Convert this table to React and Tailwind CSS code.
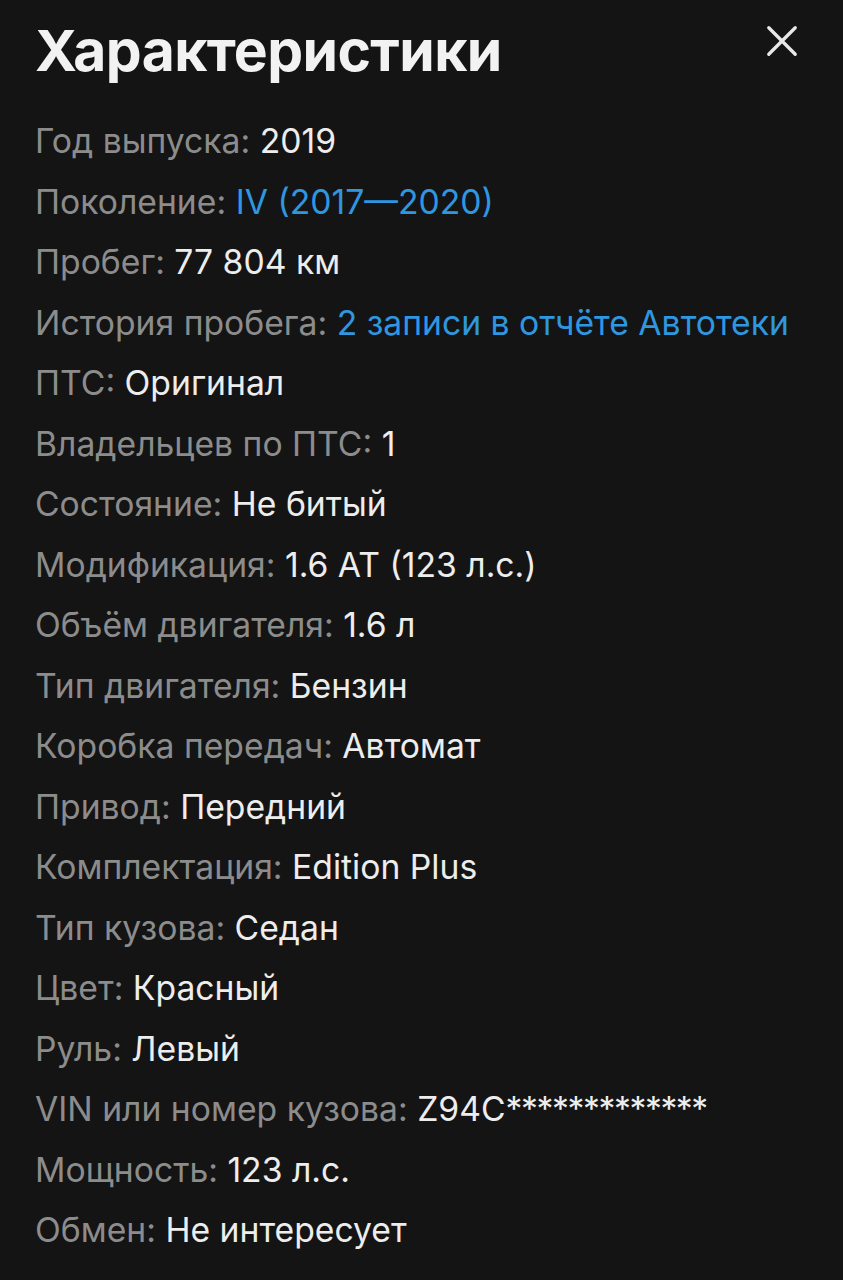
import React from "react";

const rows = [
  ["Год выпуска", "2019"],
  ["Поколение", "IV (2017—2020)", true],
  ["Пробег", "77 804 км"],
  ["История пробега", "2 записи в отчёте Автотеки", true],
  ["ПТС", "Оригинал"],
  ["Владельцев по ПТС", "1"],
  ["Состояние", "Не битый"],
  ["Модификация", "1.6 AT (123 л.с.)"],
  ["Объём двигателя", "1.6 л"],
  ["Тип двигателя", "Бензин"],
  ["Коробка передач", "Автомат"],
  ["Привод", "Передний"],
  ["Комплектация", "Edition Plus"],
  ["Тип кузова", "Седан"],
  ["Цвет", "Красный"],
  ["Руль", "Левый"],
  ["VIN или номер кузова", "Z94C", "*************"],
  ["Мощность", "123 л.с."],
  ["Обмен", "Не интересует"],
];

export default function App() {
  return (
    <div className="min-h-[1280px] w-[843px] bg-[#141414] px-[35px] pt-[16px] font-['Inter',sans-serif]">
      <div className="flex items-start justify-between">
        <h1 className="text-[57px] font-bold leading-[70px] tracking-[-0.6px] text-[#f2f2f2]">Характеристики</h1>
        <button className="mr-[9px] mt-[8px] text-[#e8e8e8]">
          <svg width="34" height="34" viewBox="0 0 36 36" fill="none" stroke="currentColor" strokeWidth="3.5" strokeLinecap="round">
            <path d="M4 4L32 32M32 4L4 32" />
          </svg>
        </button>
      </div>
      <div className="mt-[25px] flex flex-col">
        {rows.map(([label, value, extra]) => (
          <div key={label} className="h-[60.5px] text-[33.7px] leading-[60px] whitespace-nowrap">
            <span className="text-[#8c8c8c]">{label}: </span>
            <span className={extra === true ? "text-[#2f97e0]" : "text-[#ededed]"}>{value}</span>
            {typeof extra === "string" && (
              <span className="text-[#ededed] tracking-[-1.4px]">{extra}</span>
            )}
          </div>
        ))}
      </div>
    </div>
  );
}
